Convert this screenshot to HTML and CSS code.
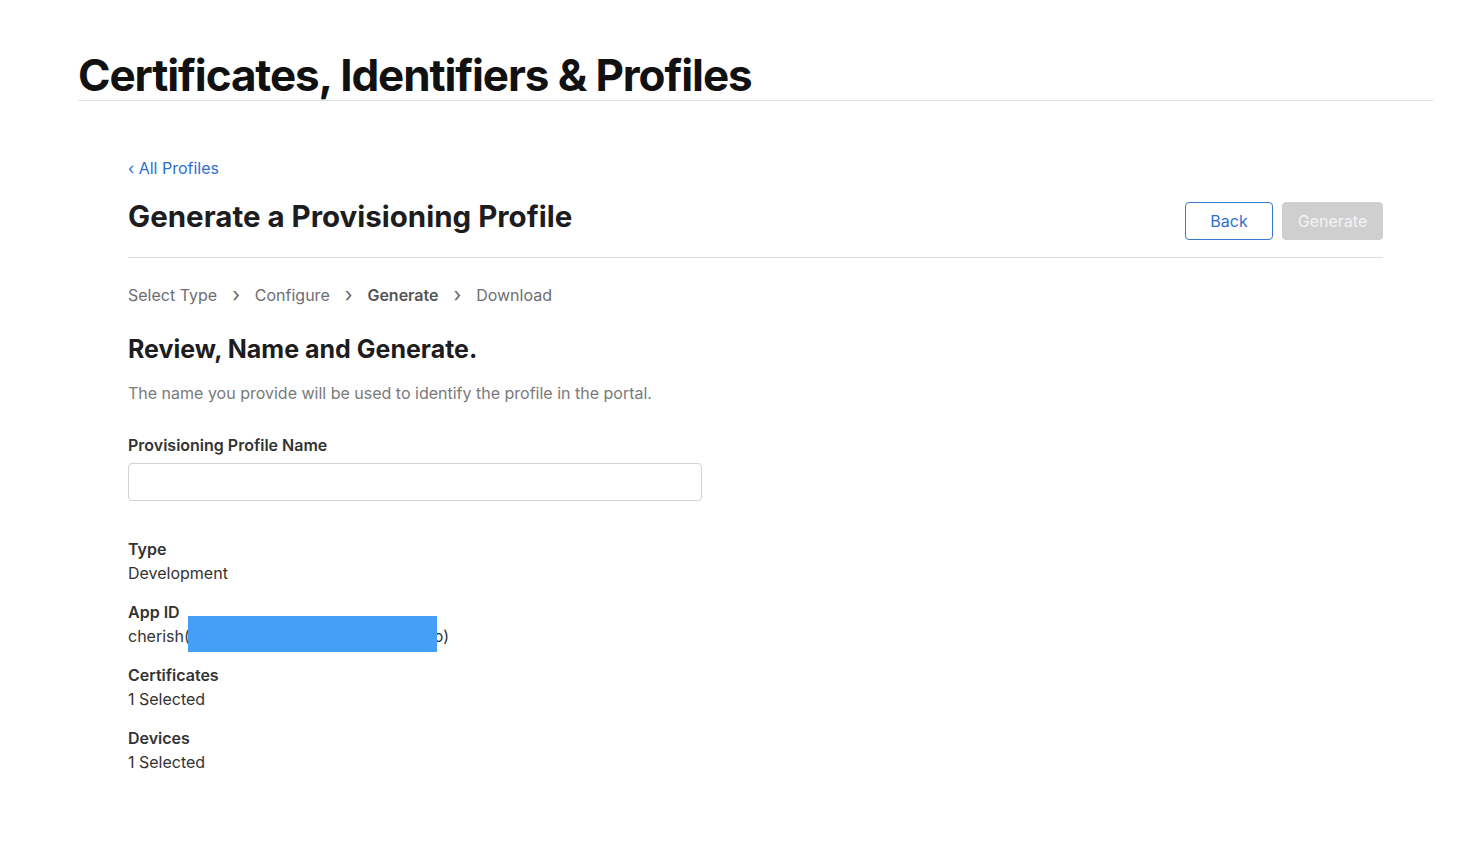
FILE: index.html
```html
<!DOCTYPE html>
<html lang="en">
<head>
<meta charset="utf-8">
<title>Certificates, Identifiers &amp; Profiles</title>
<link rel="stylesheet" href="styles.css">
</head>
<body>
<div class="page">
  <header class="top">
    <h1 class="main-title">Certificates, Identifiers &amp; Profiles</h1>
  </header>
  <main class="content">
    <a class="back-link" href="#">&#8249; All Profiles</a>
    <div class="head-row">
      <h2 class="page-title">Generate a Provisioning Profile</h2>
      <div class="actions">
        <button class="btn btn-back">Back</button>
        <button class="btn btn-generate" disabled>Generate</button>
      </div>
    </div>
    <nav class="steps">
      <span class="step">Select Type</span>
      <span class="sep">&#8250;</span>
      <span class="step">Configure</span>
      <span class="sep">&#8250;</span>
      <span class="step current">Generate</span>
      <span class="sep">&#8250;</span>
      <span class="step">Download</span>
    </nav>
    <h3 class="section-title">Review, Name and Generate.</h3>
    <p class="desc">The name you provide will be used to identify the profile in the portal.</p>
    <label class="field-label" for="pname">Provisioning Profile Name</label>
    <input class="field-input" id="pname" type="text">
    <dl class="details">
      <div class="item">
        <dt>Type</dt>
        <dd>Development</dd>
      </div>
      <div class="item">
        <dt>App ID</dt>
        <dd class="redacted-wrap">cherish(<span class="hidden-id"></span>o)<span class="redact"></span></dd>
      </div>
      <div class="item">
        <dt>Certificates</dt>
        <dd>1 Selected</dd>
      </div>
      <div class="item">
        <dt>Devices</dt>
        <dd>1 Selected</dd>
      </div>
    </dl>
  </main>
</div>
</body>
</html>
```
FILE: styles.css
```css
* { box-sizing: border-box; }
html, body { margin: 0; padding: 0; background: #fff; }
body {
  font-family: Inter, "Noto Sans", "Liberation Sans", sans-serif;
  color: #1d1d1f;
}
.page {
  padding: 0 45px 0 78px;
}
.top {
  padding-top: 50px;
  border-bottom: 1px solid #e3e3e3;
}
.main-title {
  margin: 0;
  font-size: 44px;
  line-height: 50px;
  font-weight: 700;
  letter-spacing: -1.1px;
  color: #111;
}
.content {
  padding: 56px 50px 0 50px;
  display: flex;
  flex-direction: column;
  align-items: flex-start;
}
.back-link {
  font-size: 16px;
  line-height: 22px;
  color: #2f6fcf;
  text-decoration: none;
}
.head-row {
  align-self: stretch;
  display: flex;
  justify-content: space-between;
  align-items: flex-start;
  border-bottom: 1px solid #dcdcdc;
  padding-top: 20px;
  padding-bottom: 17px;
}
.page-title {
  margin: 0;
  font-size: 29.5px;
  line-height: 34px;
  font-weight: 700;
  color: #1d1d1f;
}
.actions {
  display: flex;
  gap: 9px;
  padding-top: 3px;
}
.btn {
  height: 38px;
  border-radius: 4px;
  font-family: inherit;
  font-size: 16px;
  padding: 0 24px;
}
.btn-back {
  width: 88px;
  padding: 0;
  background: #fff;
  color: #2f6fcf;
  border: 1px solid #3a78d4;
}
.btn-generate {
  width: 101px;
  padding: 0;
  background: #cfcfcf;
  color: #f3f3f3;
  border: 1px solid #cfcfcf;
}
.steps {
  display: flex;
  align-items: center;
  gap: 14px;
  margin-top: 26px;
  font-size: 16px;
  line-height: 22px;
  color: #6e6e73;
}
.steps .current {
  font-weight: 600;
  color: #555;
}
.steps .sep {
  font-size: 20px;
  color: #666;
  padding: 0 1px;
}
.section-title {
  margin: 28px 0 0 0;
  font-size: 25px;
  line-height: 30px;
  font-weight: 700;
  color: #1d1d1f;
}
.desc {
  margin: 18px 0 0 0;
  font-size: 16px;
  line-height: 22px;
  color: #7a7a7a;
}
.field-label {
  margin-top: 30px;
  font-size: 16px;
  line-height: 22px;
  font-weight: 600;
  color: #333;
}
.field-input {
  margin-top: 7px;
  width: 574px;
  height: 38px;
  border: 1px solid #d2d2d2;
  border-radius: 4px;
  font-family: inherit;
  font-size: 16px;
  padding: 0 10px;
}
.details {
  margin: 36px 0 0 0;
  display: flex;
  flex-direction: column;
  gap: 15px;
}
.item dt {
  font-size: 16px;
  line-height: 24px;
  font-weight: 600;
  color: #333;
}
.item dd {
  margin: 0;
  font-size: 16px;
  line-height: 24px;
  color: #333;
}
.redacted-wrap {
  position: relative;
}
.hidden-id {
  display: inline-block;
  width: 244px;
  height: 1px;
}
.redact {
  position: absolute;
  left: 60px;
  top: -8px;
  width: 249px;
  height: 36px;
  background: #469ff7;
}
```
